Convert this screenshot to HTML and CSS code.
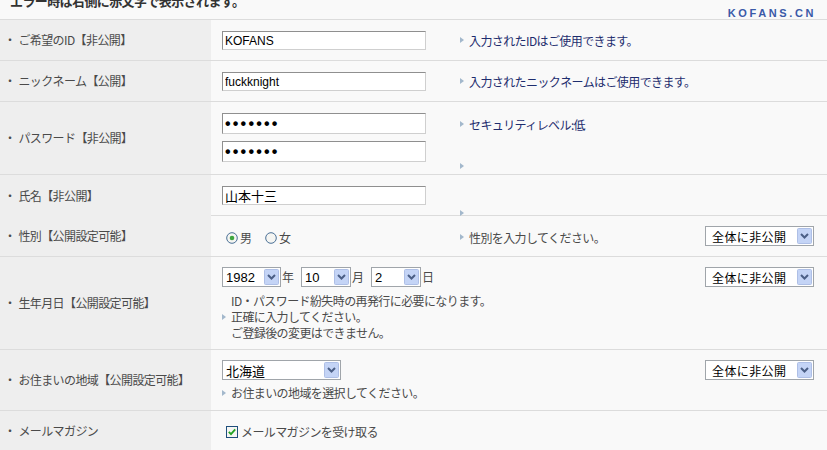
FILE: index.html
```html
<!DOCTYPE html>
<html lang="ja">
<head>
  <meta charset="UTF-8">
  <title>会員登録</title>
  <link rel="stylesheet" href="styles.css">
</head>
<body>

  <div class="head">
    <p class="notice">エラー時は右側に赤文字で表示されます。</p>
    <span class="logo">KOFANS.CN</span>
  </div>

  <div class="form">

    <div class="row r-s">
      <div class="label"><span class="dot">・</span>ご希望のID【非公開】</div>
      <div class="field"><input class="text" type="text" value="KOFANS"></div>
      <div class="note"><p class="msg ok">入力されたIDはご使用できます。</p></div>
      <div class="pub"></div>
    </div>

    <div class="row r-s">
      <div class="label"><span class="dot">・</span>ニックネーム【公開】</div>
      <div class="field"><input class="text" type="text" value="fuckknight"></div>
      <div class="note"><p class="msg ok">入力されたニックネームはご使用できます。</p></div>
      <div class="pub"></div>
    </div>

    <div class="row r-pw">
      <div class="label"><span class="dot">・</span>パスワード【非公開】</div>
      <div class="field">
        <input class="text pw" type="password" value="abcdefg">
        <input class="text pw" type="password" value="abcdefg">
      </div>
      <div class="note note-pw">
        <p class="msg ok">セキュリティレベル:低</p>
        <p class="msg empty"></p>
      </div>
      <div class="pub"></div>
    </div>

    <div class="row r-s">
      <div class="label"><span class="dot">・</span>氏名【非公開】</div>
      <div class="field"><input class="text jp" type="text" value="山本十三"></div>
      <div class="note note-name"><p class="msg empty"></p></div>
      <div class="pub"></div>
    </div>

    <div class="row r-s">
      <div class="label"><span class="dot">・</span>性別【公開設定可能】</div>
      <div class="field field-radio">
        <span class="choice">
          <svg class="radio" viewBox="0 0 12 12"><circle cx="6" cy="6" r="5.3" fill="#f5f5f2" stroke="#4a7096"/><circle cx="6" cy="6" r="2.3" fill="#3fa63f"/></svg>男
        </span>
        <span class="choice">
          <svg class="radio" viewBox="0 0 12 12"><circle cx="6" cy="6" r="5.3" fill="#f5f5f2" stroke="#4a7096"/></svg>女
        </span>
      </div>
      <div class="note note-radio"><p class="msg">性別を入力してください。</p></div>
      <div class="pub">
        <div class="select sel-pub"><span class="val">全体に非公開</span><svg class="btn" viewBox="0 0 15 16"><rect x=".5" y=".5" width="14" height="15" rx="1" fill="#c4d4f6" stroke="#aebfe6"/><path d="M4 6l3.5 3.5L11 6" fill="none" stroke="#4b5f86" stroke-width="2"/></svg></div>
      </div>
    </div>

    <div class="row r-birth">
      <div class="label"><span class="dot">・</span>生年月日【公開設定可能】</div>
      <div class="field wide">
        <div class="date">
          <div class="select sel-year"><span class="val">1982</span><svg class="btn" viewBox="0 0 15 16"><rect x=".5" y=".5" width="14" height="15" rx="1" fill="#c4d4f6" stroke="#aebfe6"/><path d="M4 6l3.5 3.5L11 6" fill="none" stroke="#4b5f86" stroke-width="2"/></svg></div>
          <span class="unit">年</span>
          <div class="select sel-md"><span class="val">10</span><svg class="btn" viewBox="0 0 15 16"><rect x=".5" y=".5" width="14" height="15" rx="1" fill="#c4d4f6" stroke="#aebfe6"/><path d="M4 6l3.5 3.5L11 6" fill="none" stroke="#4b5f86" stroke-width="2"/></svg></div>
          <span class="unit">月</span>
          <div class="select sel-md"><span class="val">2</span><svg class="btn" viewBox="0 0 15 16"><rect x=".5" y=".5" width="14" height="15" rx="1" fill="#c4d4f6" stroke="#aebfe6"/><path d="M4 6l3.5 3.5L11 6" fill="none" stroke="#4b5f86" stroke-width="2"/></svg></div>
          <span class="unit">日</span>
        </div>
        <div class="help">
          <p>ID・パスワード紛失時の再発行に必要になります。<br>正確に入力してください。<br>ご登録後の変更はできません。</p>
        </div>
      </div>
      <div class="pub">
        <div class="select sel-pub"><span class="val">全体に非公開</span><svg class="btn" viewBox="0 0 15 16"><rect x=".5" y=".5" width="14" height="15" rx="1" fill="#c4d4f6" stroke="#aebfe6"/><path d="M4 6l3.5 3.5L11 6" fill="none" stroke="#4b5f86" stroke-width="2"/></svg></div>
      </div>
    </div>

    <div class="row r-area">
      <div class="label"><span class="dot">・</span>お住まいの地域【公開設定可能】</div>
      <div class="field wide">
        <div class="select sel-area"><span class="val">北海道</span><svg class="btn" viewBox="0 0 15 16"><rect x=".5" y=".5" width="14" height="15" rx="1" fill="#c4d4f6" stroke="#aebfe6"/><path d="M4 6l3.5 3.5L11 6" fill="none" stroke="#4b5f86" stroke-width="2"/></svg></div>
        <div class="help help-area">
          <p>お住まいの地域を選択してください。</p>
        </div>
      </div>
      <div class="pub">
        <div class="select sel-pub"><span class="val">全体に非公開</span><svg class="btn" viewBox="0 0 15 16"><rect x=".5" y=".5" width="14" height="15" rx="1" fill="#c4d4f6" stroke="#aebfe6"/><path d="M4 6l3.5 3.5L11 6" fill="none" stroke="#4b5f86" stroke-width="2"/></svg></div>
      </div>
    </div>

    <div class="row r-s">
      <div class="label"><span class="dot">・</span>メールマガジン</div>
      <div class="field field-check wide">
        <svg class="check" viewBox="0 0 12 12"><rect x=".5" y=".5" width="11" height="11" fill="#f6f6f3" stroke="#1f4f7c"/><path d="M2.8 5.8l2.2 2.3 4.2-4.8" fill="none" stroke="#23a323" stroke-width="1.8"/></svg>メールマガジンを受け取る
      </div>
      <div class="pub"></div>
    </div>

  </div>

</body>
</html>
```

FILE: styles.css
```css
html, body {
  margin: 0;
  padding: 0;
  height: 100%;
  background-color: #f9f9f9;
  font-family: "Noto Sans CJK JP", sans-serif;
  font-size: 12px;
  line-height: 16px;
  color: #4a4a4a;
  overflow: hidden;
}

p {
  margin: 0;
}

.head {
  height: 19px;
  border-bottom: 1px solid #dcdcdc;
  display: flex;
  justify-content: space-between;
}

.notice {
  margin: -6px 0 0 10px;
  font-size: 13px;
  line-height: 13px;
  font-weight: bold;
  color: #333;
  letter-spacing: -0.6px;
}

.logo {
  align-self: flex-end;
  margin: 0 11px 0 0;
  font: bold 11px "Liberation Sans", sans-serif;
  letter-spacing: 2.6px;
  color: #3a5aa8;
}

.row {
  display: grid;
  grid-template-columns: 211px 249px 1fr 122px;
  border-bottom: 1px solid #dcdcdc;
}

.r-s { height: 40px; }
.r-pw { height: 72px; }
.r-birth { height: 92px; }
.r-area { height: 60px; }

.label {
  background-color: #eeeeee;
  display: flex;
  align-items: center;
  padding-left: 4px;
  letter-spacing: -0.6px;
}

.label .dot {
  margin-right: 3px;
}

.field {
  padding: 11px 0 0 11px;
}

.field.wide {
  grid-column: 2 / 4;
}

.text {
  display: block;
  box-sizing: border-box;
  width: 204px;
  height: 19px;
  margin: 0;
  padding: 0 2px;
  border: 1px solid;
  border-color: #8f8f8f #cfcfcf #cfcfcf #8f8f8f;
  background: #fff;
  font: 12px "Liberation Sans", sans-serif;
  color: #000;
  outline: none;
}

.text.pw {
  height: 21px;
  margin-bottom: 7px;
  font: bold 16px "Liberation Sans", sans-serif;
  letter-spacing: 2.2px;
}

.text.jp {
  font: 13px "Noto Sans CJK JP", sans-serif;
}

.note {
  padding-top: 13px;
  letter-spacing: -0.6px;
}

.note-pw { padding-top: 15px; }
.note-pw .empty { margin-top: 30px; }
.note-name { padding-top: 35px; }
.note-radio { padding-top: 14px; }

.msg::before {
  content: "";
  display: inline-block;
  border-left: 4px solid #a3b8cc;
  border-top: 3px solid transparent;
  border-bottom: 3px solid transparent;
  margin-right: 5px;
  vertical-align: 3px;
}

.msg.empty {
  height: 6px;
  line-height: 6px;
}

.msg.empty::before {
  vertical-align: top;
}

.ok {
  color: #1e2d6e;
}

.pub {
  padding-top: 10px;
}

.select {
  display: flex;
  align-items: center;
  box-sizing: border-box;
  height: 20px;
  border: 1px solid #a0a5aa;
  background: #fff;
  padding-left: 3px;
  font: 13px "Liberation Sans", "Noto Sans CJK JP", sans-serif;
  color: #000;
}

.select .val {
  flex: 1;
  white-space: nowrap;
}

.select .btn {
  width: 15px;
  height: 16px;
  margin-right: 1px;
}

.sel-pub {
  width: 109px;
  padding-left: 6px;
  font: 12px "Noto Sans CJK JP", sans-serif;
  letter-spacing: 0.4px;
}

.sel-year { width: 59px; }
.sel-md { width: 50px; }
.sel-area {
  width: 119px;
  font-family: "Noto Sans CJK JP", sans-serif;
}

.r-birth .field,
.r-area .field {
  padding-top: 10px;
}

.date {
  display: flex;
  align-items: center;
}

.unit {
  margin: 0 7px 0 1px;
  font-size: 12px;
}

.help {
  display: flex;
  align-items: center;
  margin-top: 6px;
  letter-spacing: -0.6px;
}

.help::before {
  content: "";
  border-left: 4px solid #a3b8cc;
  border-top: 3px solid transparent;
  border-bottom: 3px solid transparent;
  margin-right: 5px;
}

.help-area {
  margin-top: 5px;
}

.field-radio {
  display: flex;
  align-items: center;
  padding-top: 14px;
  height: 16px;
}

.choice {
  display: flex;
  align-items: center;
  margin-right: 9px;
}

.radio {
  width: 12px;
  height: 12px;
  margin: 0 2px 0 4px;
}

.field-check {
  display: flex;
  align-items: center;
  padding-top: 13px;
  height: 16px;
  letter-spacing: -0.6px;
}

.check {
  width: 12px;
  height: 12px;
  margin: 0 3px 0 4px;
}
```
